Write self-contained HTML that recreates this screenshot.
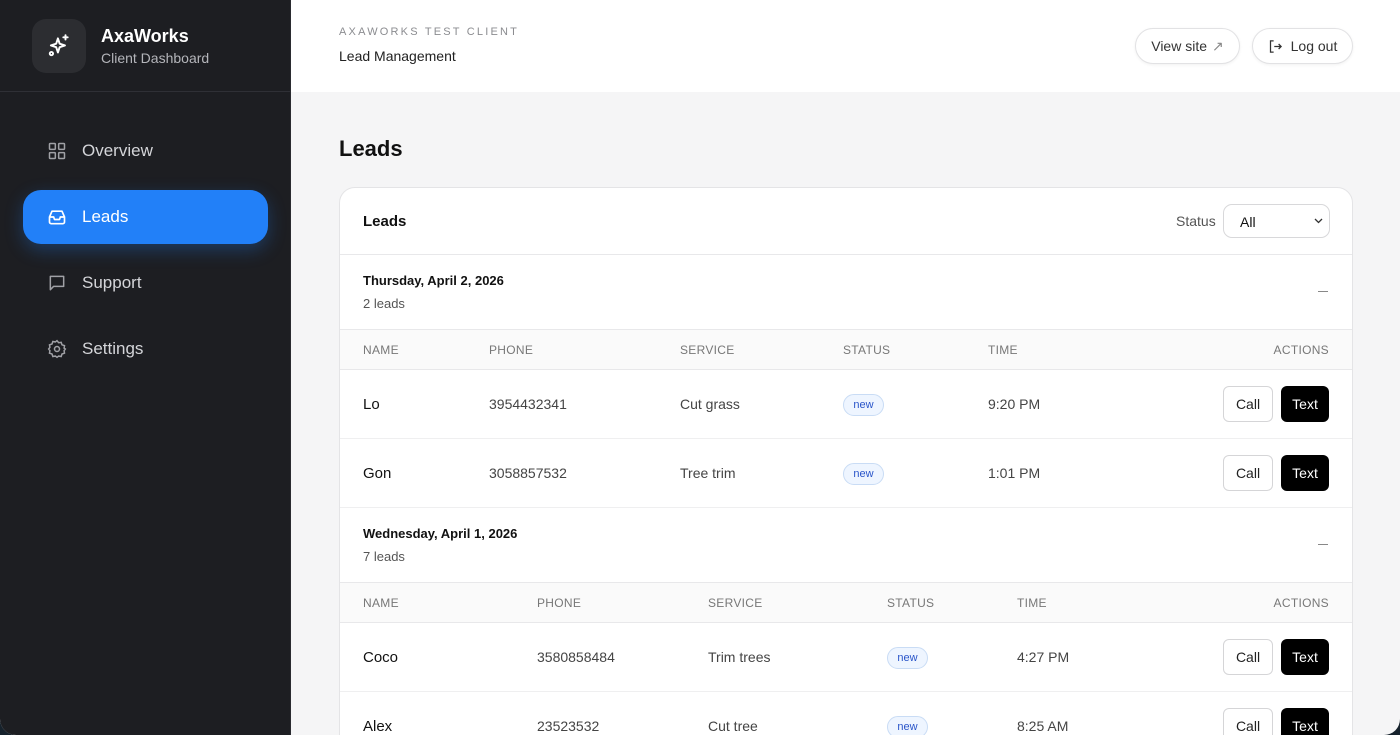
<!DOCTYPE html>
<html><head><meta charset="utf-8"><style>
*{box-sizing:border-box;margin:0;padding:0}
body{width:1400px;height:735px;overflow:hidden;background:#16222c;font-family:"Liberation Sans",Arial,sans-serif;position:relative}
.win{position:absolute;left:0;top:0;width:1400px;height:735px;border-radius:0 0 16px 16px;overflow:hidden;background:#f5f5f6}
.side{position:absolute;left:0;top:0;width:291px;height:735px;background:#1d1e22;border-right:1px solid #2a2b30}
.brand{height:92px;border-bottom:1px solid #2f3036;position:relative}
.logo{position:absolute;left:32px;top:19px;width:54px;height:54px;border-radius:14px;background:#2c2d31;display:flex;align-items:center;justify-content:center}
.bt{position:absolute;left:101px;top:26px;color:#fff;font-weight:bold;font-size:18px}
.bs{position:absolute;left:101px;top:50px;color:#b4b5ba;font-size:14px}
.nav{position:absolute;left:23px;width:245px;height:54px;border-radius:18px;display:flex;align-items:center;padding-left:24px;color:#d4d5d9;font-size:17px}
.nav svg{margin-right:15px}
.nav.act{background:#2280f8;color:#fff;box-shadow:0 6px 18px rgba(34,128,248,.3)}
.top{position:absolute;left:291px;top:0;right:0;height:92px;background:#fff}
.k{position:absolute;left:48px;top:26px;font-size:11px;letter-spacing:2.2px;color:#8b8c90}
.lm{position:absolute;left:48px;top:48px;font-size:14px;color:#222}
.pill{position:absolute;top:28px;height:36px;border:1px solid #e2e2e4;border-radius:18px;background:#fff;font-size:14px;color:#333;display:flex;align-items:center;justify-content:center;box-shadow:0 1px 3px rgba(0,0,0,.06)}
h1{position:absolute;left:339px;top:136px;font-size:22px;color:#111;font-weight:bold}
.card{position:absolute;left:339px;top:187px;width:1014px;height:600px;background:#fff;border:1px solid #e4e4e6;border-radius:16px;overflow:hidden}
.ch{height:67px;border-bottom:1px solid #e8e8ea;position:relative}
.ch b{position:absolute;left:23px;top:25px;font-size:15px;color:#111}
.st{position:absolute;left:836px;top:25px;font-size:14px;color:#555}
.sel{position:absolute;left:883px;top:16px;width:107px;height:34px;border:1px solid #d8d8da;border-radius:9px;font-size:14px;padding:9px 0 0 16px;color:#111}
.gh{height:75px;border-bottom:1px solid #e8e8ea;position:relative}
.gh b{position:absolute;left:23px;top:18px;font-size:13px;color:#111}
.gh span{position:absolute;left:23px;top:41px;font-size:13px;color:#555}
.gh i{position:absolute;right:24px;top:36px;width:10px;height:1px;background:#888}
.th{height:40px;background:#fafafa;border-bottom:1px solid #e8e8ea;position:relative;font-size:12px;color:#777;letter-spacing:.3px}
.th span,.tr span{position:absolute}
.th span{top:13px}
.tr{height:69px;border-bottom:1px solid #efeff0;position:relative;font-size:14px;color:#444}
.tr span{top:26px}
.tr .n{font-size:15px;color:#111;top:26px}
.badge{top:24px!important;height:22px;width:41px;border:1px solid #c9dcf5;background:#eef5ff;border-radius:11px;font-size:11px;color:#2a55c9;text-align:center;line-height:20px}
.call{position:absolute;right:79px;top:16px;width:50px;height:36px;border:1px solid #d5d5d7;border-radius:6px;font-size:14px;color:#222;text-align:center;line-height:34px}
.txt{position:absolute;right:23px;top:16px;width:48px;height:36px;background:#000;border-radius:6px;font-size:14px;color:#fff;text-align:center;line-height:36px}
</style></head><body><div class="win">
<div class="side">
<div class="brand"><div class="logo"><svg width="26" height="26" viewBox="0 0 24 24" fill="none" stroke="#fff" stroke-width="1.8" stroke-linejoin="round" stroke-linecap="round"><path d="M11 5l1.6 4.9L17.5 11.5l-4.9 1.6L11 18l-1.6-4.9L4.5 11.5l4.9-1.6z"/><path d="M18 2v4M16 4h4"/><circle cx="5" cy="19" r="1.5"/></svg></div><div class="bt">AxaWorks</div><div class="bs">Client Dashboard</div></div>
<div class="nav" style="top:124px"><svg width="20" height="20" viewBox="0 0 24 24" fill="none" stroke="#a0a1a6" stroke-width="1.8"><rect x="3" y="3" width="7" height="7" rx="1"/><rect x="14" y="3" width="7" height="7" rx="1"/><rect x="3" y="14" width="7" height="7" rx="1"/><rect x="14" y="14" width="7" height="7" rx="1"/></svg>Overview</div>
<div class="nav act" style="top:190px"><svg width="20" height="20" viewBox="0 0 24 24" fill="none" stroke="#fff" stroke-width="2" stroke-linejoin="round"><path d="M3 12l3-7h12l3 7v6a2 2 0 0 1-2 2H5a2 2 0 0 1-2-2z"/><path d="M3 12h5l1 3h6l1-3h5"/></svg>Leads</div>
<div class="nav" style="top:256px"><svg width="20" height="20" viewBox="0 0 24 24" fill="none" stroke="#a0a1a6" stroke-width="1.8" stroke-linejoin="round"><path d="M4 4h16v12H8l-4 4z"/></svg>Support</div>
<div class="nav" style="top:322px"><svg width="20" height="20" viewBox="0 0 24 24" fill="none" stroke="#a0a1a6" stroke-width="1.8"><circle cx="12" cy="12" r="3"/><path d="M12 2l2 2.5 3-.5 1 3 3 1-.5 3L22 12l-1.5 2 .5 3-3 1-1 3-3-.5L12 22l-2-1.5-3 .5-1-3-3-1 .5-3L2 12l1.5-2-.5-3 3-1 1-3 3 .5z"/></svg>Settings</div>
</div>
<div class="top"><div class="k">AXAWORKS TEST CLIENT</div><div class="lm">Lead Management</div>
<div class="pill" style="left:844px;width:105px">View site <span style="color:#888;margin-left:5px">↗</span></div>
<div class="pill" style="left:961px;width:101px"><svg width="15" height="15" viewBox="0 0 24 24" fill="none" stroke="#333" stroke-width="2" style="margin-right:8px"><path d="M9 3H4v18h5M10 12h11M17 8l4 4-4 4"/></svg>Log out</div></div>
<h1>Leads</h1>
<div class="card">
<div class="ch"><b>Leads</b><span class="st">Status</span><div class="sel">All<svg style="position:absolute;right:6px;top:13px" width="9" height="6" viewBox="0 0 9 6" fill="none" stroke="#333" stroke-width="1.3"><path d="M1 1l3.5 3.5L8 1"/></svg></div></div>
<div class="gh"><b>Thursday, April 2, 2026</b><span>2 leads</span><i></i></div>
<div class="th"><span style="left:23px">NAME</span><span style="left:149px">PHONE</span><span style="left:340px">SERVICE</span><span style="left:503px">STATUS</span><span style="left:648px">TIME</span><span style="right:23px">ACTIONS</span></div>
<div class="tr"><span class="n" style="left:23px">Lo</span><span style="left:149px">3954432341</span><span style="left:340px">Cut grass</span><span class="badge" style="left:503px">new</span><span style="left:648px">9:20 PM</span><div class="call">Call</div><div class="txt">Text</div></div>
<div class="tr"><span class="n" style="left:23px">Gon</span><span style="left:149px">3058857532</span><span style="left:340px">Tree trim</span><span class="badge" style="left:503px">new</span><span style="left:648px">1:01 PM</span><div class="call">Call</div><div class="txt">Text</div></div>
<div class="gh"><b>Wednesday, April 1, 2026</b><span>7 leads</span><i></i></div>
<div class="th"><span style="left:23px">NAME</span><span style="left:197px">PHONE</span><span style="left:368px">SERVICE</span><span style="left:547px">STATUS</span><span style="left:677px">TIME</span><span style="right:23px">ACTIONS</span></div>
<div class="tr"><span class="n" style="left:23px">Coco</span><span style="left:197px">3580858484</span><span style="left:368px">Trim trees</span><span class="badge" style="left:547px">new</span><span style="left:677px">4:27 PM</span><div class="call">Call</div><div class="txt">Text</div></div>
<div class="tr"><span class="n" style="left:23px">Alex</span><span style="left:197px">23523532</span><span style="left:368px">Cut tree</span><span class="badge" style="left:547px">new</span><span style="left:677px">8:25 AM</span><div class="call">Call</div><div class="txt">Text</div></div>
</div>
</div></body></html>
